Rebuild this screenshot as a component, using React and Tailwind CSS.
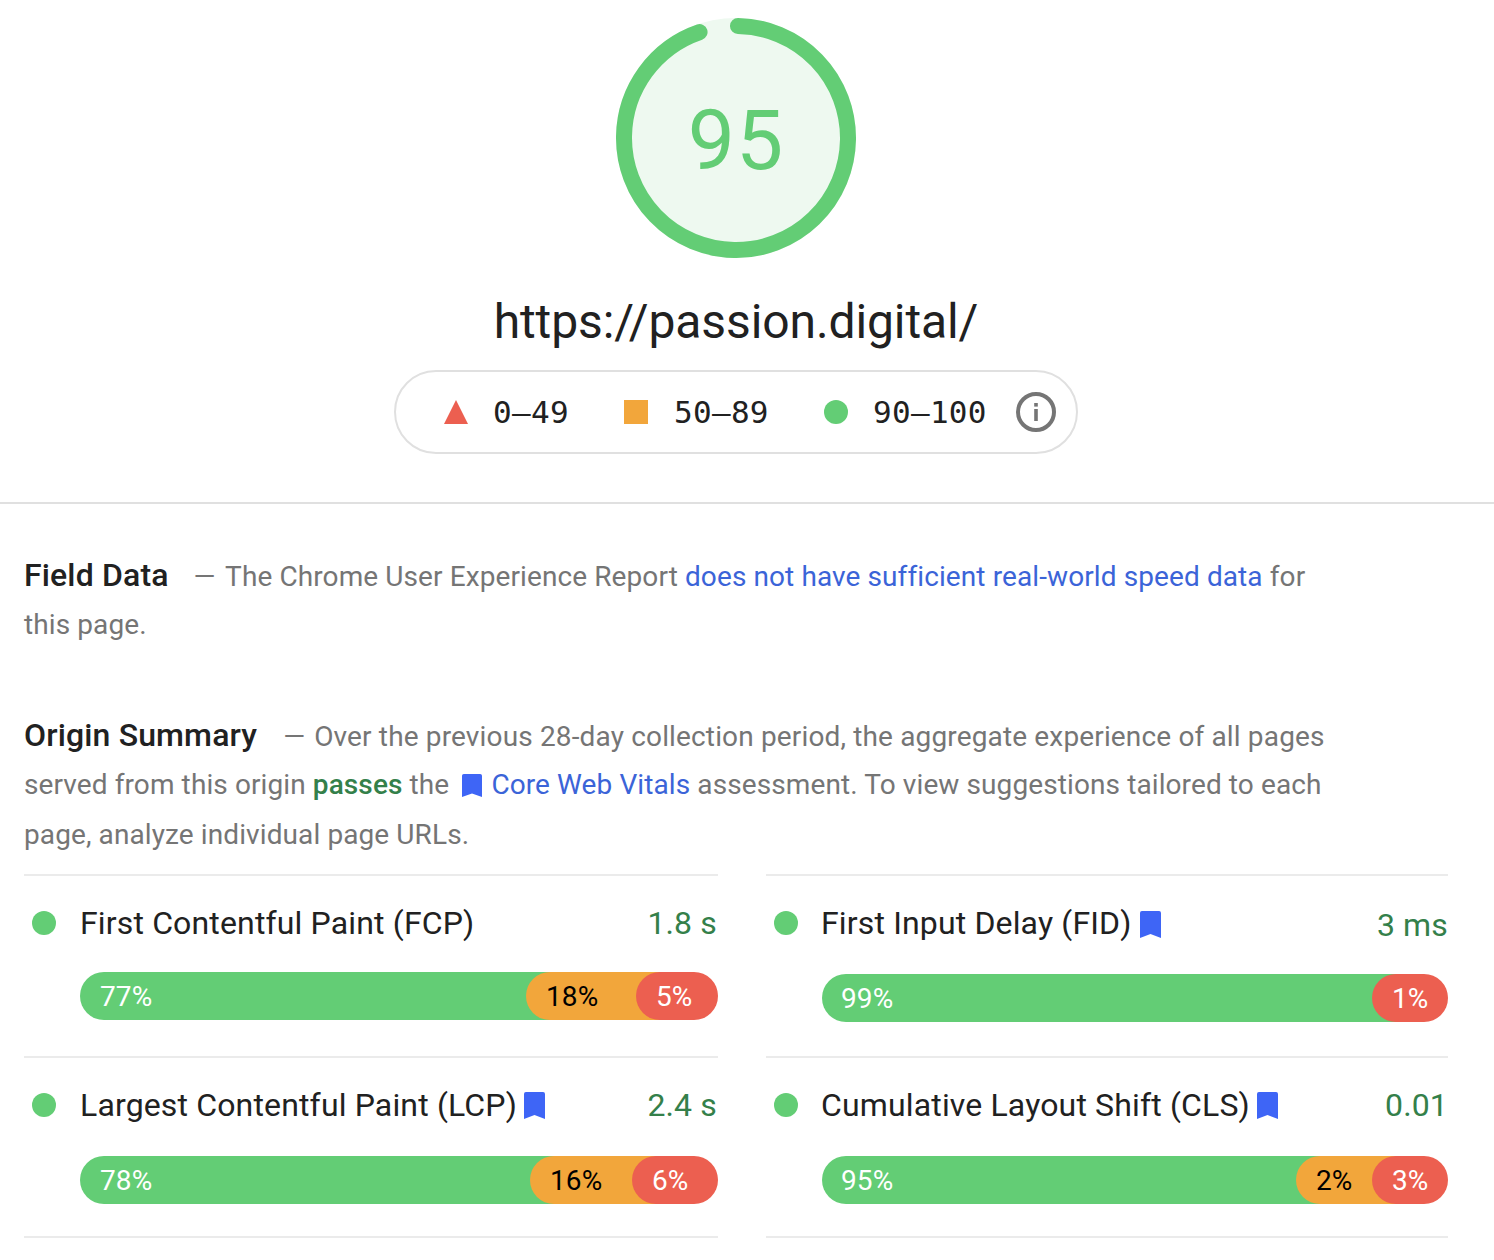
import React from "react";

const Mark = ({ className = "w-[21px] h-[27px]" }) => (
  <svg viewBox="0 0 22 27" preserveAspectRatio="none" className={`shrink-0 ${className}`}>
    <path d="M0 2a2 2 0 0 1 2-2h18a2 2 0 0 1 2 2v25l-11-4-11 4z" fill="#3e65f6" />
  </svg>
);

const Metric = ({ name, value, mark, bars, height, barTop, titleClass = "ml-[24px]", markClass = "ml-[9px] mt-[7px]", valueClass = "" }) => (
  <div style={{ height }} className="border-t-2 border-[#ebebeb] pt-[28px]">
    <div className="flex items-start h-[38px]">
      <span className="w-[24px] h-[24px] mt-[7px] ml-[8px] rounded-full bg-[#63cd75] shrink-0" />
      <span className={`text-[32px] leading-[38px] text-[#212121] whitespace-nowrap tracking-[0.15px] ${titleClass}`}>{name}</span>
      {mark && <Mark className={`w-[21px] h-[27px] ${markClass}`} />}
      <span className={`ml-auto text-[32px] leading-[38px] text-[#34804a] tracking-[0.15px] ${valueClass}`}>{value}</span>
    </div>
    <div style={{ marginTop: barTop }} className="ml-[56px] h-[48px] rounded-full overflow-hidden flex text-[28px] leading-[50px] text-white tracking-[0.1px]">
      {bars}
    </div>
  </div>
);

const bar = (green, orange, red, oStart, rStart, pad = 20) => (
  <>
    <div style={{ width: (orange ? oStart : rStart) + 24, paddingLeft: pad }} className="bg-[#63cd75] shrink-0">{green}</div>
    {orange && (
      <div style={{ width: rStart - oStart + 24 }} className="bg-[#f2a63b] text-black pl-[20px] rounded-l-[24px] -ml-[24px] shrink-0 relative">{orange}</div>
    )}
    <div className="flex-1 bg-[#ec5f50] pl-[20px] rounded-l-[24px] -ml-[24px] relative">{red}</div>
  </>
);

export default function App() {
  return (
    <div className="w-[1494px] h-[1260px] bg-white overflow-hidden font-['Roboto',sans-serif]">
      <div className="h-[504px] border-b-2 border-[#e0e0e0]">
        <div className="w-[1472px] flex flex-col items-center">
          <div className="relative w-[240px] h-[240px] mt-[18px]">
            <svg viewBox="0 0 240 240" className="absolute inset-0 w-full h-full">
              <circle cx="120" cy="120" r="120" fill="#eef9f0" />
              <circle
                cx="120"
                cy="120"
                r="112"
                fill="none"
                stroke="#63cd75"
                strokeWidth="16"
                strokeLinecap="round"
                pathLength="360"
                strokeDasharray="340 20"
                transform="rotate(-89 120 120)"
              />
            </svg>
            <div className="absolute inset-0 pt-[6px] flex items-center justify-center text-[84px] text-[#63cd75] tracking-[1px]">95</div>
          </div>
          <div className="mt-[34px] text-[48px] leading-[60px] text-[#212121] tracking-[-0.1px]">https://passion.digital/</div>
          <div className="mt-[18px] w-[684px] h-[84px] rounded-full border-2 border-[#e0e0e0] flex items-center pl-[48px] font-['DejaVu_Sans_Mono',monospace] text-[31px] text-[#212121] tracking-[0.3px] whitespace-nowrap">
            <svg viewBox="0 0 24 24" className="w-[24px] h-[24px]"><path d="M12 0l12 24H0z" fill="#ec5f50" /></svg>
            <span className="ml-[25px] w-[75px]">0–49</span>
            <span className="ml-[56px] w-[24px] h-[24px] bg-[#f2a63b]" />
            <span className="ml-[26px] w-[94px]">50–89</span>
            <span className="ml-[56px] w-[24px] h-[24px] rounded-full bg-[#63cd75]" />
            <span className="ml-[25px] w-[114px]">90–100</span>
            <svg viewBox="0 0 40 40" className="ml-[29px] w-[40px] h-[40px]">
              <circle cx="20" cy="20" r="18" fill="none" stroke="#757575" strokeWidth="4" />
              <rect x="18.2" y="17" width="3.6" height="12" fill="#757575" />
              <rect x="18.2" y="11" width="3.6" height="3.6" fill="#757575" />
            </svg>
          </div>
        </div>
      </div>

      <div className="px-[24px] text-[28px] text-[#757575] tracking-[0.1px]">
        <p className="mt-[47px] w-[1300px] leading-[48px]">
          <b className="text-[32px] font-medium text-[#212121] tracking-[0.15px]">Field Data</b>
          <span className="ml-[25px] mr-[3px]">—</span> The Chrome User Experience Report{" "}
          <span className="text-[#3b64d8]">does not have sufficient real-world speed data</span> for this page.
        </p>
        <p className="mt-[62px] w-[1320px] leading-[48px]">
          <b className="text-[32px] font-medium text-[#212121] tracking-[0.15px]">Origin Summary</b>
          <span className="ml-[26px] mr-[2px]">—</span>{" "}
          <span className="tracking-[0.15px]">Over the previous 28-day collection period, the aggregate experience of all pages</span> served from this origin{" "}
          <b className="font-medium text-[#34804a]">passes</b> the{" "}
          <Mark className="inline-block w-[20px] h-[23px] ml-[6px] mr-[2px] mb-[14px] align-[-17px]" />{" "}
          <span className="text-[#3b64d8]">Core Web Vitals</span> assessment. To view suggestions tailored to each page, analyze individual page URLs.
        </p>
        <div className="mt-[15px] flex gap-[48px] w-[1424px]">
          <div className="w-[694px]">
            <Metric name="First Contentful Paint (FCP)" value="1.8 s" valueClass="mr-[1px]" height={182} barTop={30} bars={bar("77%", "18%", "5%", 446, 556)} />
            <Metric name="Largest Contentful Paint (LCP)" value="2.4 s" valueClass="mr-[1px]" mark markClass="ml-[7px] mt-[6px]" height={180} barTop={32} bars={bar("78%", "16%", "6%", 450, 552)} />
            <div className="border-t-2 border-[#ebebeb]" />
          </div>
          <div className="w-[682px]">
            <Metric name="First Input Delay (FID)" value="3 ms" mark titleClass="ml-[23px]" markClass="ml-[8px] mt-[7px]" valueClass="mt-[2px]" height={182} barTop={32} bars={bar("99%", null, "1%", 0, 550, 19)} />
            <Metric name="Cumulative Layout Shift (CLS)" value="0.01" mark titleClass="ml-[23px]" markClass="ml-[7px] mt-[6px]" height={180} barTop={32} bars={bar("95%", "2%", "3%", 474, 550, 19)} />
            <div className="border-t-2 border-[#ebebeb]" />
          </div>
        </div>
      </div>
    </div>
  );
}
